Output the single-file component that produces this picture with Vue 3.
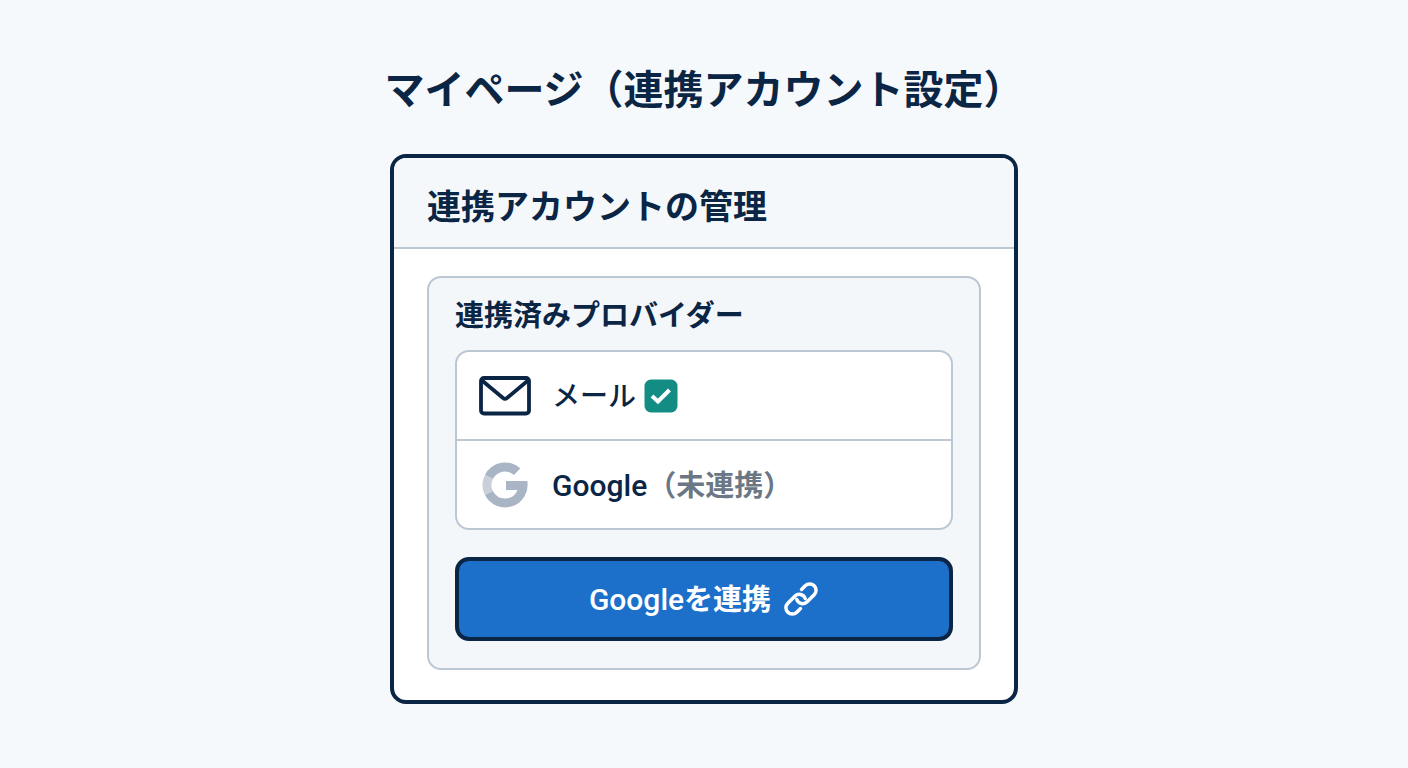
<template>
    <main class="page">
        <h1 class="page-title">マイページ（連携アカウント設定）</h1>

        <section class="card" aria-labelledby="card-title">
            <header class="card-header">
                <h2 id="card-title">連携アカウントの管理</h2>
            </header>

            <div class="card-body">
                <div class="panel">
                    <h3>連携済みプロバイダー</h3>

                    <ul class="providers">
                        <li v-for="provider in providers" :key="provider.id" class="provider">
                            <svg v-if="provider.id === 'mail'" class="provider-icon" viewBox="0 0 54 54" aria-hidden="true">
                                <rect x="3" y="9" width="48" height="35.500" rx="3" fill="none" stroke="#0b2545" stroke-width="3.800" />
                                <path d="M4 11.500 L25 29 Q27 30.500 29 29 L50 11.500" fill="none" stroke="#0b2545" stroke-width="3.800" />
                            </svg>
                            <svg v-else class="provider-icon" viewBox="0 0 54 54" aria-hidden="true">
                                <path d="M42.300 10.300 A22.600 22.600 0 0 0 6.900 16.900 L14.900 20.900 A13.500 13.500 0 0 1 36 17 Z" fill="#a9b4c4" />
                                <path d="M6.900 16.900 A22.600 22.600 0 0 0 6.900 37.100 L14.900 33.100 A13.500 13.500 0 0 1 14.900 20.900 Z" fill="#c9d0da" />
                                <path d="M6.900 37.100 A22.600 22.600 0 0 0 49.300 23 H28 V32 H39.500 A13.500 13.500 0 0 1 14.900 33.100 Z" fill="#a9b4c4" />
                            </svg>

                            <span class="provider-text">
                                <span :class="{ latin: provider.id === 'google' }">{{ provider.name }}</span>
                                <span v-if="!provider.linked" class="provider-status">（未連携）</span>
                            </span>
                            <svg v-if="provider.linked" class="check" viewBox="0 0 34 34" role="img" aria-label="連携済み">
                                <rect x="0.500" y="0.500" width="33" height="33" rx="6.500" fill="#138d84" />
                                <path d="M8 17 L14 22.500 L25.500 11" fill="none" stroke="#fff" stroke-width="4" />
                            </svg>
                        </li>
                    </ul>

                    <button type="button" class="link-button" @click="linkGoogle">
                        <span class="link-text"><span class="latin">Google</span>を連携</span>
                        <svg class="link-icon" viewBox="0 0 36 36" aria-hidden="true">
                            <path d="M18.500 8.500 L22.200 4.800 A6.300 6.300 0 0 1 31.200 13.800 L24.200 20.800 A6.300 6.300 0 0 1 13.800 18.500" />
                            <path d="M17.500 27.500 L13.800 31.200 A6.300 6.300 0 0 1 4.800 22.200 L11.800 15.200 A6.300 6.300 0 0 1 22.200 17.500" />
                        </svg>
                    </button>
                </div>
            </div>
        </section>
    </main>
</template>

<script setup>
    import { ref } from 'vue';

    const providers = ref([
        { id: 'mail', name: 'メール', linked: true },
        { id: 'google', name: 'Google', linked: false }
    ]);

    /**
     * METHODS
     */
    function linkGoogle() {
        providers.value.find(provider => provider.id === 'google').linked = true;
    }
</script>

<style>
body {
    margin: 0;
    background: #f5f9fc;
}
</style>

<style scoped>
.page {
    min-height: 100vh;
    box-sizing: border-box;
    padding: 61px 24px 64px;
    color: #0b2545;
    font-family: Roboto, "Noto Sans CJK JP", sans-serif;
}

h1,
h2,
h3 {
    margin: 0;
    font-weight: 700;
}

.page-title {
    font-size: 40px;
    line-height: 60px;
    text-align: center;
}

.card {
    max-width: 628px;
    box-sizing: border-box;
    margin: 33px auto 0;
    overflow: hidden;
    background: #fff;
    border: 4px solid #0b2545;
    border-radius: 16px;
}

.card-header {
    padding: 24px 33px 15px;
    background: #f4f8fa;
    border-bottom: 2px solid #bcc7d4;
}

.card-header h2 {
    font-size: 34px;
    line-height: 50px;
}

.card-body {
    padding: 27px 33px 30px;
}

.panel {
    padding: 16px 26px 27px;
    background: #f4f7f9;
    border: 2px solid #bcc7d4;
    border-radius: 14px;
}

.panel h3 {
    font-size: 29px;
    line-height: 44px;
}

.providers {
    margin: 12px 0 27px;
    padding: 0;
    list-style: none;
    background: #fff;
    border: 2px solid #bcc7d4;
    border-radius: 14px;
}

.provider {
    display: flex;
    align-items: center;
    height: 87px;
    padding: 0 21px;
    font-size: 28px;
    font-weight: 500;
}

.provider + .provider {
    border-top: 2px solid #bcc7d4;
}

.provider-icon {
    width: 54px;
    height: 54px;
    margin-right: 20px;
}

.provider-text {
    display: flex;
    align-items: baseline;
    padding-top: 2px;
    line-height: 40px;
}

.provider-status {
    color: #6b7785;
    font-size: 29px;
    font-weight: 700;
}

.latin {
    font-size: 30px;
    font-weight: 500;
}

.check {
    width: 34px;
    height: 34px;
    margin-left: 8px;
}

.link-button {
    display: flex;
    align-items: center;
    justify-content: center;
    gap: 12px;
    width: 100%;
    height: 84px;
    padding: 0;
    color: #fff;
    font: inherit;
    background: #1c70ca;
    border: 4px solid #0b2545;
    border-radius: 14px;
    cursor: pointer;
}

.link-text {
    padding-top: 2px;
    font-size: 29px;
    font-weight: 700;
    line-height: 40px;
}

.link-icon {
    width: 36px;
    height: 36px;
    fill: none;
    stroke: currentColor;
    stroke-width: 3.500;
    stroke-linecap: round;
    stroke-linejoin: round;
}
</style>
